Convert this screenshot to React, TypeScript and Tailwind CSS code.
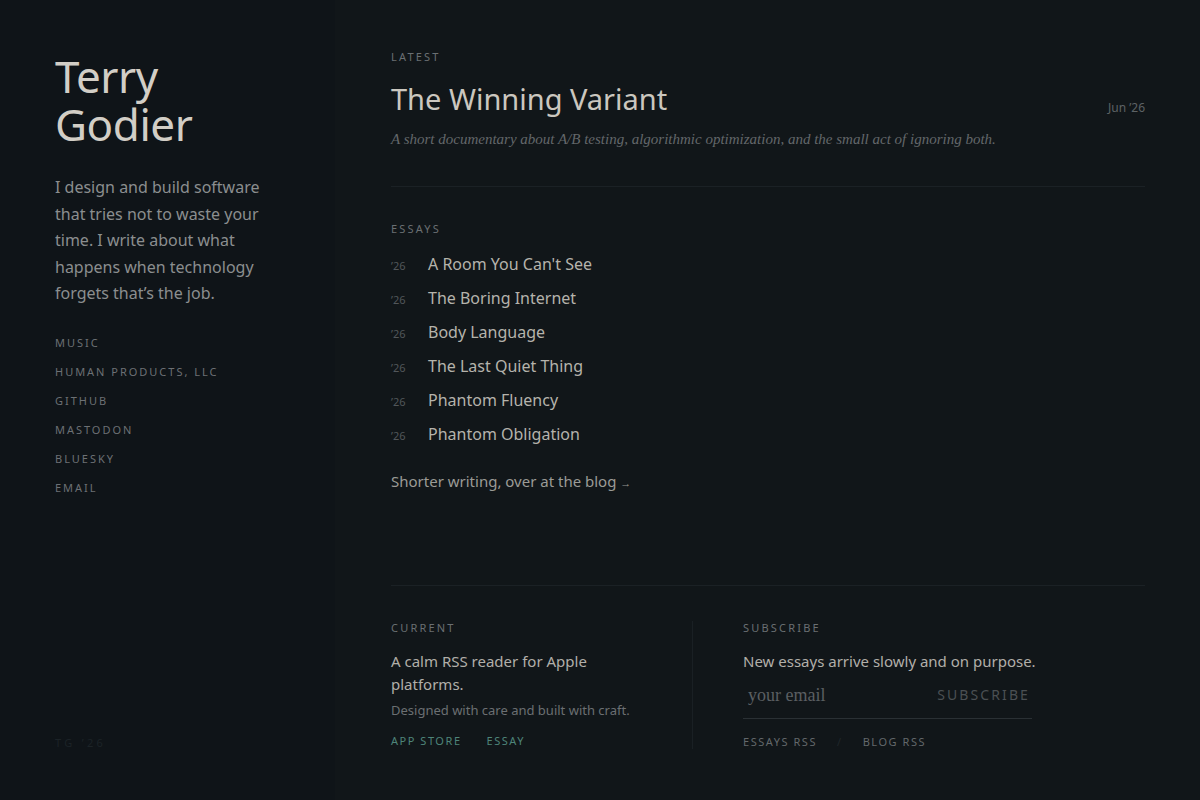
import React from "react";

const sans = { fontFamily: '"Noto Sans", "Open Sans", sans-serif' };
const serif = { fontFamily: '"Liberation Serif", "DejaVu Serif", serif' };

const links = ["Music", "Human Products, LLC", "GitHub", "Mastodon", "Bluesky", "Email"];

const essays = [
  "A Room You Can't See",
  "The Boring Internet",
  "Body Language",
  "The Last Quiet Thing",
  "Phantom Fluency",
  "Phantom Obligation",
];

function Label({ children }: { children: React.ReactNode }) {
  return (
    <div className="text-[11px] leading-[14px] uppercase tracking-[0.2em] text-[#6a6f72]">{children}</div>
  );
}

export default function App() {
  return (
    <div className="flex w-[1200px] h-[800px] bg-[#111619] overflow-hidden" style={sans}>
      {/* Sidebar */}
      <aside className="w-[335px] shrink-0 h-full bg-[#0f1418] flex flex-col pl-[55px] pt-[52px] pb-[50px]">
        <h1 className="text-[44px] leading-[48px] text-[#d2cec6] tracking-[-0.01em]">
          <span className="block">Terry</span>
          <span className="block">Godier</span>
        </h1>
        <p className="mt-[26px] w-[220px] text-[16px] leading-[26.5px] text-[#8b8e8f]">
          I design and build software that tries not to waste your time. I write about what happens when
          technology forgets that’s the job.
        </p>
        <nav className="mt-[29px] flex flex-col gap-[15px]">
          {links.map((l) => (
            <a key={l} className="text-[11px] leading-[14px] uppercase tracking-[0.18em] text-[#6c7074]">
              {l}
            </a>
          ))}
        </nav>
        <div className="mt-auto text-[11px] leading-[14px] tracking-[0.3em] text-[#1c2327]">TG ’26</div>
      </aside>

      {/* Main column */}
      <main className="flex-1 h-full pl-[56px] pr-[55px] pt-[50px] flex flex-col">
        <section>
          <Label>Latest</Label>
          <div className="mt-[17px] flex items-start justify-between">
            <h2 className="text-[29px] leading-[36px] text-[#cbc7bf]">The Winning Variant</h2>
            <span className="mt-[18px] text-[12px] text-[#5d6265]">Jun ’26</span>
          </div>
          <p className="mt-[12px] text-[15px] leading-[20px] italic text-[#63676a]" style={serif}>
            A short documentary about A/B testing, algorithmic optimization, and the small act of ignoring both.
          </p>
        </section>

        <div className="mt-[37px] h-px bg-[#1b2125]" />

        <section className="mt-[35px]">
          <Label>Essays</Label>
          <ul className="mt-[16px] flex flex-col gap-[10px]">
            {essays.map((e) => (
              <li key={e} className="flex items-baseline">
                <span className="w-[37px] text-[11px] text-[#51565a]">’26</span>
                <span className="text-[16px] leading-[24px] text-[#b5b3ac]">{e}</span>
              </li>
            ))}
          </ul>
          <a className="mt-[25px] block text-[15px] leading-[20px] text-[#9b9b96]">
            Shorter writing, over at the blog <span className="text-[11px]">→</span>
          </a>
        </section>

        <div className="mt-[92px] h-px bg-[#1b2125]" />

        <section className="mt-[35px] flex">
          <div className="w-[302px] shrink-0 pr-[40px] border-r border-[#1a2024]">
            <Label>Current</Label>
            <p className="mt-[15px] w-[240px] text-[15px] leading-[23px] text-[#b1afa9]">
              A calm RSS reader for Apple platforms.
            </p>
            <p className="mt-[5px] text-[13px] leading-[18px] text-[#6b6f72]">Designed with care and built with craft.</p>
            <div className="mt-[15px] flex gap-[25px] text-[11px] leading-[14px] uppercase tracking-[0.14em] text-[#4e8579]">
              <a>App Store</a>
              <a>Essay</a>
            </div>
          </div>
          <div className="pl-[50px] flex-1">
            <Label>Subscribe</Label>
            <p className="mt-[15px] text-[15px] leading-[23px] text-[#b1afa9] whitespace-nowrap">
              New essays arrive slowly and on purpose.
            </p>
            <div className="mt-[10px] w-[289px] flex items-center justify-between border-b border-[#2a3034] pb-[11px] pl-[5px] pr-[2px]">
              <span className="text-[18px] leading-[24px] text-[#5b5f62]" style={serif}>
                your email
              </span>
              <span className="text-[14px] leading-[20px] uppercase tracking-[0.15em] text-[#4b5053]">Subscribe</span>
            </div>
            <div className="mt-[16px] flex items-center text-[11px] leading-[14px] uppercase tracking-[0.14em] text-[#63686b]">
              <a>Essays RSS</a>
              <span className="mx-[20px] text-[#20262a]">/</span>
              <a>Blog RSS</a>
            </div>
          </div>
        </section>
      </main>
    </div>
  );
}
